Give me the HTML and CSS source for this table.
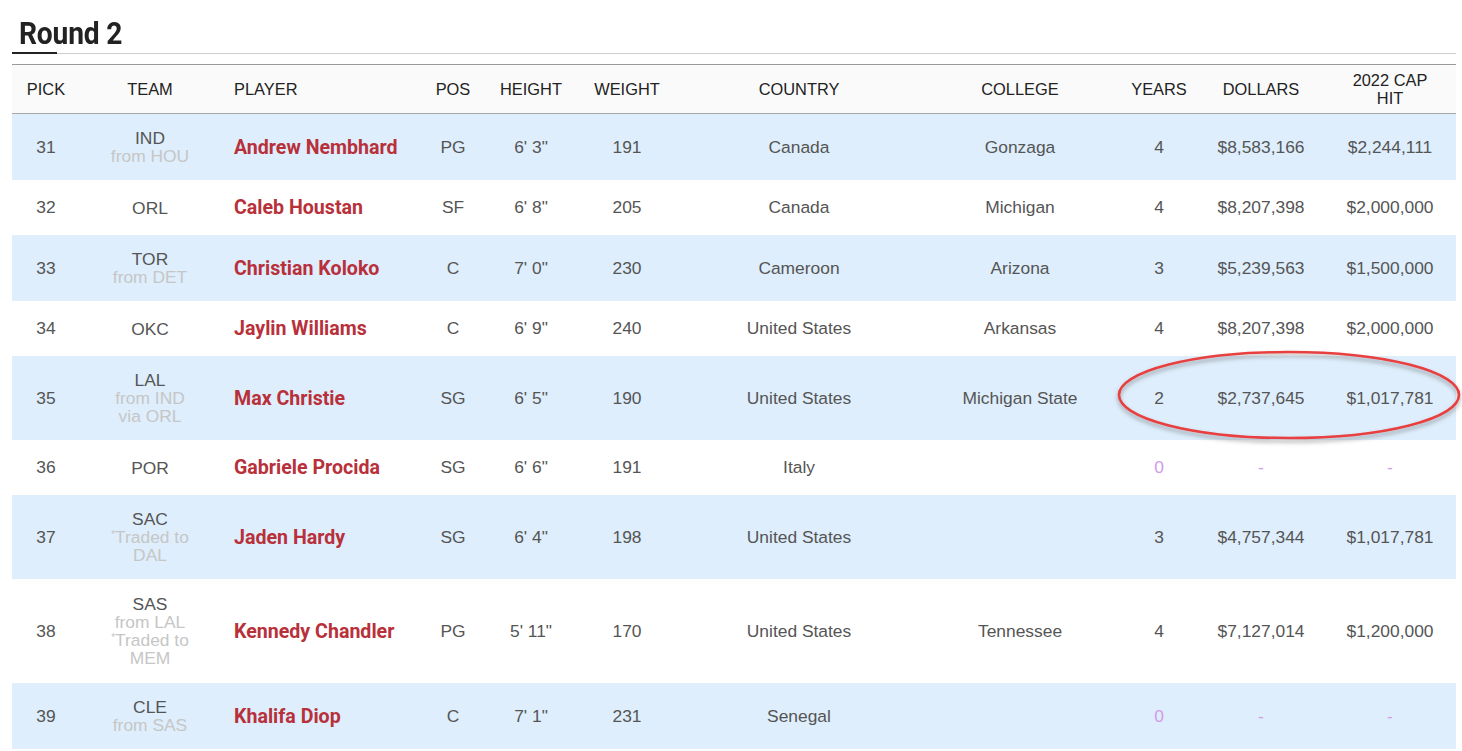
FILE: index.html
```html
<!DOCTYPE html>
<html lang="en">
<head>
<meta charset="utf-8">
<title>Round 2</title>
<link rel="stylesheet" href="styles.css">
</head>
<body>
<div class="page">
  <div class="round-head">
    <h2 class="round-title"><span>Round 2</span></h2>
  </div>
  <table class="draft">
    <colgroup>
      <col class="c-pick"><col class="c-team"><col class="c-player"><col class="c-pos"><col class="c-height"><col class="c-weight"><col class="c-country"><col class="c-college"><col class="c-years"><col class="c-dollars"><col class="c-cap">
    </colgroup>
    <thead>
      <tr>
        <th>PICK</th><th>TEAM</th><th class="left">PLAYER</th><th>POS</th><th>HEIGHT</th><th>WEIGHT</th><th>COUNTRY</th><th>COLLEGE</th><th>YEARS</th><th>DOLLARS</th><th>2022 CAP<br>HIT</th>
      </tr>
    </thead>
    <tbody>
      <tr class="alt">
        <td>31</td>
        <td class="team"><span class="abbr">IND</span><span class="sub">from HOU</span></td>
        <td class="player">Andrew Nembhard</td>
        <td>PG</td><td>6' 3"</td><td>191</td><td>Canada</td><td>Gonzaga</td><td>4</td><td>$8,583,166</td><td>$2,244,111</td>
      </tr>
      <tr>
        <td>32</td>
        <td class="team"><span class="abbr">ORL</span></td>
        <td class="player">Caleb Houstan</td>
        <td>SF</td><td>6' 8"</td><td>205</td><td>Canada</td><td>Michigan</td><td>4</td><td>$8,207,398</td><td>$2,000,000</td>
      </tr>
      <tr class="alt">
        <td>33</td>
        <td class="team"><span class="abbr">TOR</span><span class="sub">from DET</span></td>
        <td class="player">Christian Koloko</td>
        <td>C</td><td>7' 0"</td><td>230</td><td>Cameroon</td><td>Arizona</td><td>3</td><td>$5,239,563</td><td>$1,500,000</td>
      </tr>
      <tr>
        <td>34</td>
        <td class="team"><span class="abbr">OKC</span></td>
        <td class="player">Jaylin Williams</td>
        <td>C</td><td>6' 9"</td><td>240</td><td>United States</td><td>Arkansas</td><td>4</td><td>$8,207,398</td><td>$2,000,000</td>
      </tr>
      <tr class="alt">
        <td>35</td>
        <td class="team"><span class="abbr">LAL</span><span class="sub">from IND</span><span class="sub">via ORL</span></td>
        <td class="player">Max Christie</td>
        <td>SG</td><td>6' 5"</td><td>190</td><td>United States</td><td>Michigan State</td><td>2</td><td>$2,737,645</td><td>$1,017,781</td>
      </tr>
      <tr>
        <td>36</td>
        <td class="team"><span class="abbr">POR</span></td>
        <td class="player">Gabriele Procida</td>
        <td>SG</td><td>6' 6"</td><td>191</td><td>Italy</td><td></td><td class="none">0</td><td class="none">-</td><td class="none">-</td>
      </tr>
      <tr class="alt">
        <td>37</td>
        <td class="team"><span class="abbr">SAC</span><span class="sub"><sup>*</sup>Traded to</span><span class="sub">DAL</span></td>
        <td class="player">Jaden Hardy</td>
        <td>SG</td><td>6' 4"</td><td>198</td><td>United States</td><td></td><td>3</td><td>$4,757,344</td><td>$1,017,781</td>
      </tr>
      <tr class="tall">
        <td>38</td>
        <td class="team"><span class="abbr">SAS</span><span class="sub">from LAL</span><span class="sub"><sup>*</sup>Traded to</span><span class="sub">MEM</span></td>
        <td class="player">Kennedy Chandler</td>
        <td>PG</td><td>5' 11"</td><td>170</td><td>United States</td><td>Tennessee</td><td>4</td><td>$7,127,014</td><td>$1,200,000</td>
      </tr>
      <tr class="alt">
        <td>39</td>
        <td class="team"><span class="abbr">CLE</span><span class="sub">from SAS</span></td>
        <td class="player">Khalifa Diop</td>
        <td>C</td><td>7' 1"</td><td>231</td><td>Senegal</td><td></td><td class="none">0</td><td class="none">-</td><td class="none">-</td>
      </tr>
    </tbody>
  </table>
</div>
<svg class="annotation" width="352" height="106" viewBox="0 0 352 106" aria-hidden="true">
  <defs>
    <filter id="shadow" x="-10%" y="-20%" width="120%" height="150%">
      <feDropShadow dx="0" dy="3" stdDeviation="2" flood-color="#555" flood-opacity="0.55"/>
    </filter>
  </defs>
  <ellipse cx="177" cy="52" rx="170" ry="43" fill="none" stroke="#e8403f" stroke-width="2.6" filter="url(#shadow)"/>
</svg>
</body>
</html>
```

FILE: styles.css
```css
html, body {
  margin: 0;
  padding: 0;
  background: #ffffff;
}

body {
  position: relative;
  font-family: "Liberation Sans", Arial, sans-serif;
  color: #555555;
}

.page {
  padding: 15px 6px 0 12px;
}

.round-head {
  border-bottom: 1px solid #cfcfcf;
  margin-bottom: 10px;
}

.round-title {
  margin: 0;
  padding: 0 0 1px 7px;
  font-family: "Roboto", "Liberation Sans", sans-serif;
  font-weight: 700;
  font-size: 32px;
  line-height: 36px;
  color: #222222;
  letter-spacing: -0.2px;
}

.round-title span {
  display: inline-block;
  transform: scaleX(0.88);
  transform-origin: left center;
}

.round-head::after {
  content: "";
  display: block;
  width: 45px;
  height: 2px;
  background: #222222;
  margin-bottom: -1px;
}

.draft {
  width: 1444px;
  border-collapse: collapse;
  table-layout: fixed;
  border-top: 1px solid #9a9a9a;
}

.c-pick { width: 68px; }
.c-team { width: 140px; }
.c-player { width: 200px; }
.c-pos { width: 66px; }
.c-height { width: 90px; }
.c-weight { width: 102px; }
.c-country { width: 242px; }
.c-college { width: 200px; }
.c-years { width: 78px; }
.c-dollars { width: 126px; }
.c-cap { width: 132px; }

.draft thead tr {
  background: #fafafa;
  border-bottom: 1px solid #a8a8a8;
}

.draft th {
  font-weight: 400;
  font-size: 16.4px;
  line-height: 18px;
  color: #222222;
  padding: 6px 0;
  height: 36px;
  text-align: center;
  vertical-align: middle;
}

.draft th.left {
  text-align: left;
  padding-left: 14px;
}

.draft td {
  font-size: 17.4px;
  line-height: 25px;
  padding: 15px 0;
  text-align: center;
  vertical-align: middle;
  color: #555555;
}

.draft tr.alt {
  background: #deeefc;
}

.draft td.team {
  line-height: 18px;
}

.team .abbr,
.team .sub {
  display: block;
}

.team .sub {
  color: #c6c6c6;
}

.team .sub sup {
  font-size: 10px;
  line-height: 0;
  vertical-align: 5px;
}

.draft td.player {
  text-align: left;
  padding-left: 14px;
  font-family: "Roboto", "Liberation Sans", sans-serif;
  font-weight: 700;
  font-size: 19.6px;
  color: #b8303a;
}

.draft tr.tall td {
  padding-top: 16px;
  padding-bottom: 16px;
}

.draft td.none {
  color: #d29ae9;
}

.annotation {
  position: absolute;
  left: 1112px;
  top: 343px;
  overflow: visible;
}
```
